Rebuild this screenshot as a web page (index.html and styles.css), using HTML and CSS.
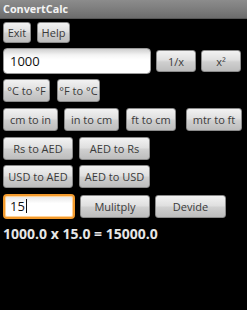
FILE: index.html
```html
<!DOCTYPE html>
<html>
<head>
<meta charset="utf-8">
<link rel="stylesheet" href="styles.css">
</head>
<body>
<div class="titlebar">ConvertCalc</div>
<div class="content">
  <div class="row r1">
    <button class="btn w28">Exit</button>
    <button class="btn w33">Help</button>
  </div>
  <div class="row r2">
    <div class="field main">1000</div>
    <button class="btn w40 h22">1/x</button>
    <button class="btn w40 h22">x²</button>
  </div>
  <div class="row r3">
    <button class="btn w47">°C to °F</button>
    <button class="btn w43">°F to °C</button>
  </div>
  <div class="row r4">
    <button class="btn w55">cm to in</button>
    <button class="btn w55">in to cm</button>
    <button class="btn w50">ft to cm</button>
    <button class="btn w56">mtr to ft</button>
  </div>
  <div class="row r5">
    <button class="btn w70">Rs to AED</button>
    <button class="btn w71">AED to Rs</button>
  </div>
  <div class="row r6">
    <button class="btn w70">USD to AED</button>
    <button class="btn w71">AED to USD</button>
  </div>
  <div class="row r7">
    <div class="field focus">15<span class="caret"></span></div>
    <button class="btn w70 h23">Mulitply</button>
    <button class="btn w71 h23">Devide</button>
  </div>
  <div class="result">1000.0 x 15.0 = 15000.0</div>
</div>
</body>
</html>
```
FILE: styles.css
```css
html, body {
  margin: 0;
  padding: 0;
  background: #000;
  width: 247px;
  height: 310px;
  overflow: hidden;
  font-family: "Open Sans", "DejaVu Sans", sans-serif;
}
.titlebar {
  height: 19px;
  box-sizing: border-box;
  padding-left: 3px;
  background: linear-gradient(#8c8c8c, #7a7a7a 60%, #6c6c6c);
  border-bottom: 1px solid #555;
  color: #f4f4f4;
  font-weight: bold;
  font-size: 10.8px;
  line-height: 18px;
}
.content {
  padding: 3px 0 0 3px;
  display: flex;
  flex-direction: column;
  gap: 5px;
}
.row {
  display: flex;
  align-items: center;
}
.r1 { height: 21px; gap: 6px; }
.r2 { height: 26px; gap: 5px; }
.r3 { height: 23px; gap: 7px; }
.r4 { height: 24px; gap: 6px; }
.r5 { height: 24px; gap: 6px; }
.r6 { height: 23px; gap: 6px; }
.r7 { height: 26px; gap: 5px; }
.btn {
  height: 100%;
  box-sizing: border-box;
  margin: 0;
  padding: 0;
  border: 1px solid #8a8a8a;
  border-radius: 3px;
  background: linear-gradient(#f2f2f2, #e0e0e0 45%, #cfcfcf 55%, #bdbdbd);
  color: #3a3a3a;
  font-family: "Open Sans", "DejaVu Sans", sans-serif;
  font-size: 11px;
  line-height: 1;
  text-align: center;
  white-space: nowrap;
}
.h22 { height: 22px; }
.h23 { height: 23px; }
.r4 .btn, .r5 .btn, .r3 .btn { height: 23px; }
.w28 { width: 28px; }
.w33 { width: 33px; }
.w40 { width: 40px; }
.w43 { width: 43px; }
.w47 { width: 47px; }
.w50 { width: 50px; }
.w55 { width: 55px; }
.w56 { width: 56px; }
.w70 { width: 70px; }
.w71 { width: 71px; }
.r4 .w50 { margin-left: 1px; margin-right: 4px; }
.field {
  height: 100%;
  box-sizing: border-box;
  border: 1px solid #9a9a9a;
  border-radius: 4px;
  background: linear-gradient(#cfcfcf, #f4f4f4 25%, #fff 45%);
  color: #111;
  font-size: 13px;
  line-height: 24px;
  padding-left: 6px;
  display: flex;
  align-items: center;
}
.main { width: 148px; }
.focus {
  width: 72px;
  height: 25px;
  border: 2px solid #f39a2c;
  box-shadow: inset 0 0 0 1px #ffd39a;
  background: linear-gradient(#e4e4e4, #fff 35%);
  padding-left: 5px;
}
.caret {
  display: inline-block;
  width: 1px;
  height: 14px;
  background: #111;
  margin-left: 1px;
}
.result {
  margin-top: 1px;
  color: #e6e6e6;
  font-weight: bold;
  font-size: 14px;
  line-height: 18px;
}
```
